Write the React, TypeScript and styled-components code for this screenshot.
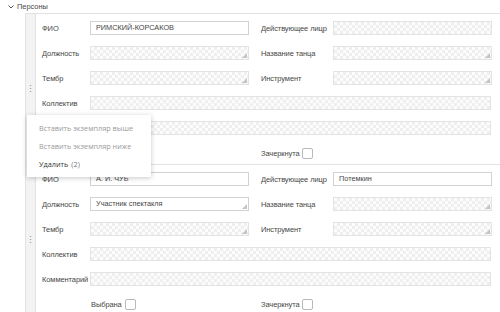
import React from 'react';
import styled, { createGlobalStyle } from 'styled-components';

type Field = { value?: string; disabled?: boolean; select?: boolean };

type Person = {
  fio: Field;
  role: Field;
  position: Field;
  dance: Field;
  timbre: Field;
  instrument: Field;
  team: Field;
  comment: Field;
};

const persons: Person[] = [
  {
    fio: { value: 'РИМСКИЙ-КОРСАКОВ' },
    role: { disabled: true },
    position: { disabled: true, select: true },
    dance: { disabled: true, select: true },
    timbre: { disabled: true, select: true },
    instrument: { disabled: true, select: true },
    team: { disabled: true },
    comment: { disabled: true },
  },
  {
    fio: { value: 'А. И. ЧУБ' },
    role: { value: 'Потемкин' },
    position: { value: 'Участник спектакля', select: true },
    dance: { disabled: true, select: true },
    timbre: { disabled: true, select: true },
    instrument: { disabled: true, select: true },
    team: { disabled: true },
    comment: { disabled: true },
  },
];

export default function App(): JSX.Element {
  return (
    <>
      <GlobalStyle />
      <Page>
        <SectionHeader>
          <svg width="6" height="4" viewBox="0 0 6 4">
            <polyline points="0.5,0.5 3,3 5.5,0.5" fill="none" stroke="#555" strokeWidth="1" />
          </svg>
          <span>Персоны</span>
        </SectionHeader>
        <List>
          {persons.map((p, i) => (
            <Instance key={i}>
              <Gutter>
                <Handle>⋮</Handle>
              </Gutter>
              <Form>
                <Label>ФИО</Label>
                <Input field={p.fio} />
                <Label $right>Действующее лицр</Label>
                <Input field={p.role} />

                <Label>Должность</Label>
                <Input field={p.position} />
                <Label $right>Название танца</Label>
                <Input field={p.dance} />

                <Label>Тембр</Label>
                <Input field={p.timbre} />
                <Label $right>Инструмент</Label>
                <Input field={p.instrument} />

                <Label>Коллектив</Label>
                <Input field={p.team} wide />

                <Label>Комментарий</Label>
                <Input field={p.comment} wide />

                <Check>
                  Выбрана <Box />
                </Check>
                <Check $right>
                  Зачеркнута <Box />
                </Check>
              </Form>
            </Instance>
          ))}
          <Menu>
            <MenuItem $muted>Вставить экземпляр выше</MenuItem>
            <MenuItem $muted>Вставить экземпляр ниже</MenuItem>
            <MenuItem>
              Удалить <Count>(2)</Count>
            </MenuItem>
          </Menu>
        </List>
      </Page>
    </>
  );
}

function Input({ field, wide }: { field: Field; wide?: boolean }) {
  return (
    <Box3 $disabled={!!field.disabled} $select={!!field.select} $wide={!!wide}>
      {field.value}
    </Box3>
  );
}

const GlobalStyle = createGlobalStyle`
  html, body {
    margin: 0;
    background: #fff;
  }
  body {
    font-family: 'Liberation Sans', Arial, sans-serif;
    font-size: 8px;
    color: #474747;
  }
`;

const Page = styled.div`
  width: 500px;
  height: 312px;
  overflow: hidden;
`;

const SectionHeader = styled.div`
  display: flex;
  align-items: center;
  gap: 3px;
  height: 13px;
  padding-left: 8px;
  font-size: 7.4px;

  svg {
    margin-top: 1px;
  }
`;

const List = styled.div`
  position: relative;
  margin-left: 25px;
  border-top: 1px solid #e2e2e2;
  border-left: 1px solid #e2e2e2;
`;

const Instance = styled.div`
  display: flex;
  border-bottom: 1px solid #e2e2e2;
`;

const Gutter = styled.div`
  width: 9px;
  flex: none;
  background: #f3f3f3;
  border-right: 1px solid #e2e2e2;
  display: flex;
  align-items: center;
  justify-content: center;
`;

const Handle = styled.span`
  color: #888;
  font-size: 9px;
  line-height: 1;
`;

const Form = styled.div`
  flex: 1;
  display: grid;
  grid-template-columns: 48px 160px 83px 158px;
  grid-auto-rows: 14px;
  row-gap: 11px;
  align-items: center;
  padding: 7px 0 4px 6px;
`;

const Label = styled.div<{ $right?: boolean }>`
  white-space: nowrap;
  font-size: 7.5px;
  letter-spacing: -0.1px;
  padding-left: ${(p) => (p.$right ? '11px' : '0')};
`;

const Box3 = styled.div<{ $disabled: boolean; $select: boolean; $wide: boolean }>`
  position: relative;
  box-sizing: border-box;
  height: 14px;
  width: ${(p) => (p.$wide ? 'auto' : '159px')};
  grid-column: ${(p) => (p.$wide ? '2 / 5' : 'auto')};
  border: 1px solid ${(p) => (p.$disabled ? '#e3e3e3' : '#d2d2d2')};
  background: ${(p) =>
    p.$disabled ? 'repeating-conic-gradient(#efefef 0 25%, #fcfcfc 0 50%) 0 0 / 6px 6px' : '#fff'};
  padding-left: 5px;
  font-size: 7.3px;
  line-height: 12px;
  white-space: nowrap;
  overflow: hidden;

  &::after {
    content: '';
    display: ${(p) => (p.$select ? 'block' : 'none')};
    position: absolute;
    right: 1px;
    bottom: 1px;
    width: 0;
    height: 0;
    border-left: 5px solid transparent;
    border-bottom: 5px solid #c4c4c4;
  }
`;

const Check = styled.div<{ $right?: boolean }>`
  grid-column: ${(p) => (p.$right ? '3 / 5' : '2 / 3')};
  display: flex;
  align-items: center;
  gap: 3px;
  height: 11px;
  font-size: 7.5px;
  letter-spacing: -0.1px;
  padding-left: ${(p) => (p.$right ? '11px' : '1px')};
`;

const Box = styled.span`
  box-sizing: border-box;
  width: 11px;
  height: 11px;
  border: 1px solid #b9b9b9;
  border-radius: 2px;
  background: #fff;
`;

const Menu = styled.div`
  position: absolute;
  left: 1px;
  top: 101px;
  width: 124px;
  padding: 4px 0;
  background: #fff;
  box-shadow: 0 1px 5px rgba(0, 0, 0, 0.22);
  font-family: 'Open Sans', 'Noto Sans', sans-serif;
`;

const MenuItem = styled.div<{ $muted?: boolean }>`
  height: 18px;
  display: flex;
  align-items: center;
  gap: 3px;
  padding-left: 12px;
  font-size: 7.3px;
  color: ${(p) => (p.$muted ? '#9a9a9a' : '#333')};
`;

const Count = styled.span`
  color: #777;
`;
